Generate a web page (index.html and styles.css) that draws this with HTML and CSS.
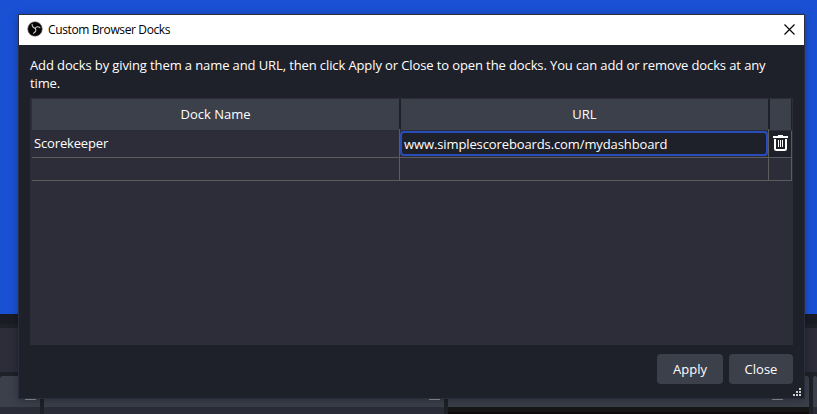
FILE: index.html
```html
<!DOCTYPE html>
<html lang="en">
<head>
<meta charset="utf-8">
<title>Custom Browser Docks</title>
<link rel="stylesheet" href="styles.css">
</head>
<body>
<div class="backdrop">
  <div class="preview"></div>
  <div class="divider"></div>
  <div class="toolbar"></div>
  <div class="docks">
    <div class="dock"><i></i></div>
    <div class="dock"><i></i></div>
    <div class="dock black"><i></i></div>
    <div class="dock"></div>
  </div>
</div>
<main class="dialog">
  <header class="titlebar">
    <svg class="logo" viewBox="0 0 16 16"><circle cx="8" cy="8" r="7.3" fill="#050505" stroke="#888" stroke-width=".6"/><g fill="none" stroke="#ccc" stroke-width="1.1" stroke-linecap="round"><path d="M8.300 7.200C6.300 6.800 5.100 5.500 5.100 3.300"/><path d="M8.300 7.200C9.300 5.400 11.300 5.200 12.900 6.600"/><path d="M8.300 7.200C9.400 9.200 8.700 11 6.600 12.200"/></g></svg>
    <h1>Custom Browser Docks</h1>
    <svg class="close" viewBox="0 0 11 11"><path d="M.5.5l10 10M10.5.5l-10 10" fill="none" stroke="#000" stroke-width="1.15"/></svg>
  </header>
  <section class="content">
    <p>Add docks by giving them a name and URL, then click Apply or Close to open the docks. You can add or remove docks at any<br>time.</p>
    <div class="table">
      <div class="row head"><div>Dock Name</div><div>URL</div><div></div></div>
      <div class="row first">
        <div class="name">Scorekeeper</div>
        <div class="field"><span>www.simplescoreboards.com/mydashboard</span></div>
        <div class="trash"><svg viewBox="0 0 15 16"><path d="M5 0h5v1h5v2H0V1h5z" fill="#fff"/><path d="M2 4v9.5Q2 15 3.500 15h8Q13 15 13 13.500V4" fill="none" stroke="#fff" stroke-width="2"/><path d="M5.500 5v7M7.500 5v7M9.500 5v7" stroke="#fff" stroke-width="1"/></svg></div>
      </div>
      <div class="row second"><div></div><div></div><div></div></div>
    </div>
    <div class="actions"><button class="apply">Apply</button><button>Close</button></div>
  </section>
  <svg class="grip" viewBox="0 0 8 8"><path d="M6 0h2v2H6zM3 3h2v2H3zM6 3h2v2H6zM0 6h2v2H0zM3 6h2v2H3zM6 6h2v2H6z" fill="#ccc"/></svg>
</main>
</body>
</html>
```
FILE: styles.css
```css
* { box-sizing: border-box; }
body { margin: 0; width: 817px; height: 414px; overflow: hidden; font: 13px/18px "Open Sans", "Noto Sans", sans-serif; color: #fff; }
.backdrop { height: 414px; background: #1f2129; }
.preview { height: 314px; background: #1a51d4; }
.divider { height: 10px; background: #1a1b24; }
.toolbar { height: 44px; margin: 4px 0; background: #2c2d38; }
.docks { display: grid; grid-template-columns: 40px 400px 361px 4px; gap: 4px; height: 38px; }
.dock { display: flex; justify-content: flex-end; background: linear-gradient(#3c404b 31px, #2a2c38 31px); border-radius: 3px 3px 0 0; }
.dock.black { background: linear-gradient(#3c404b 31px, #171717 31px 36px, #0f0b0c 36px); }
.dock i { width: 11px; height: 24px; margin-right: 4px; border: 1px solid #777; border-bottom: 2px solid #999; }
.dock.black i { margin-right: 26px; }
.dialog { position: absolute; left: 18px; top: 14px; width: 787px; height: 385px; border: 1px solid #292d3d; background: #1f212a; box-shadow: 0 2px 9px rgba(0,0,0,.3); }
.titlebar { display: flex; align-items: center; height: 30px; padding: 0 9px 0 8px; background: #fff; color: #000; }
.logo { width: 16px; height: 16px; margin-top: -2px; }
.titlebar h1 { margin: 0 auto 0 5px; font: 12px/18px "Open Sans", sans-serif; letter-spacing: -.38px; }
.close { width: 11px; height: 11px; margin-top: -2px; }
.content { padding: 11px 11px 0; }
p { margin: 0; height: 42px; white-space: nowrap; letter-spacing: -.11px; }
.table { width: 763px; height: 247px; padding: 1px 1px 0 2px; background: #2c2d38; }
.row { display: grid; grid-template-columns: 368px 369px 23px; }
.head { height: 30px; text-align: center; line-height: 31px; background: #1f212a; }
.head div { background: #3c404b; margin-right: 1px; }
.head div + div { margin-left: 1px; }
.first { height: 28px; }
.second { height: 24px; }
.first > div, .second > div { border-right: 1px solid #5c5c5c; border-bottom: 1px solid #5c5c5c; }
.name { padding: 5px 2px; letter-spacing: -.15px; }
.first .field { padding-top: 2px; }
.field span { display: block; height: 25px; border: 2px solid #284cb8; border-radius: 4px; padding: 2px; background: #1f212a; line-height: 19px; white-space: nowrap; letter-spacing: -.11px; }
.first .trash { display: flex; justify-content: center; align-items: flex-start; margin-top: 2px; padding-top: 4px; background: #1f212a; }
.trash svg { width: 15px; height: 16px; }
.actions { display: flex; justify-content: flex-end; gap: 6px; padding-top: 9px; }
button { width: 64px; height: 30px; padding: 0; border: 0; border-radius: 4px; background: #3c404b; color: #fff; font: inherit; line-height: 30px; }
button.apply { width: 66px; }
.grip { position: absolute; right: 3px; bottom: 2px; width: 8px; height: 8px; }
```
